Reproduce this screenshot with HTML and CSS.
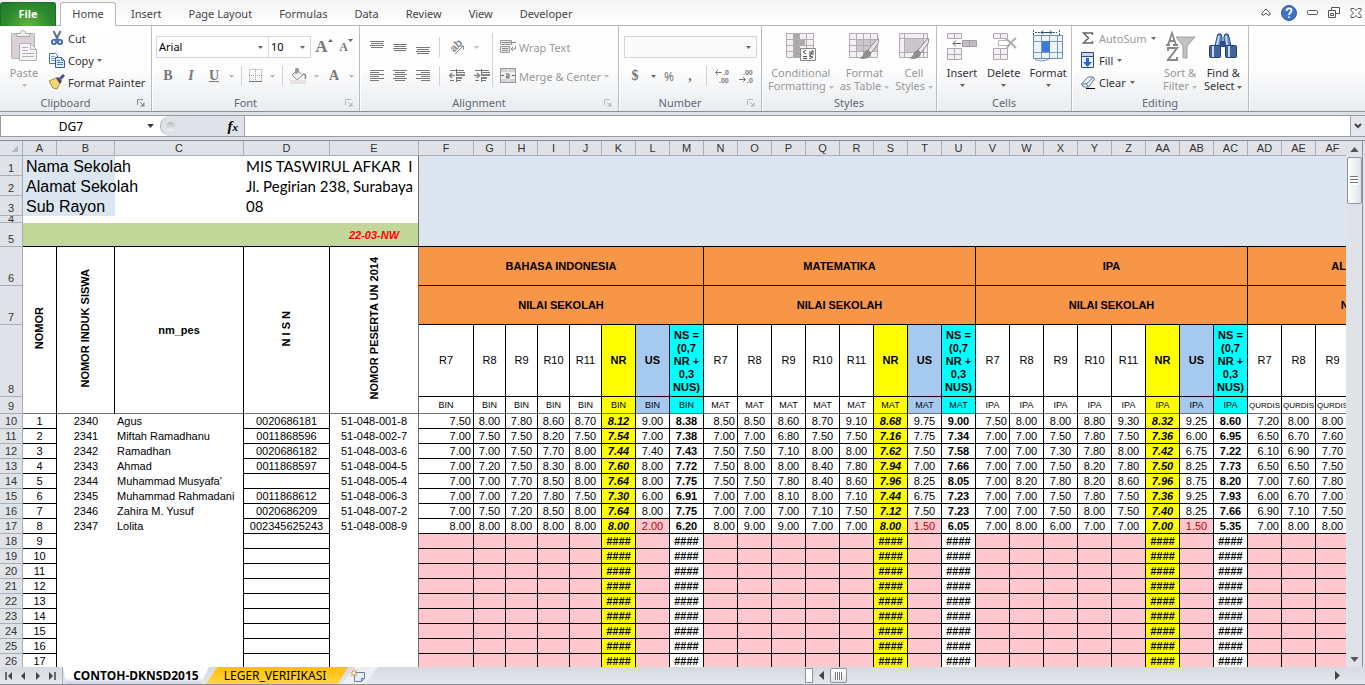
FILE: index.html
```
<!DOCTYPE html>
<html lang="en">

<head>
    <meta charset="UTF-8">
    <meta name="viewport" content="width=device-width, initial-scale=1.0">
    <title>CONTOH-DKNSD2015</title>
    <link rel="stylesheet" href="styles.css">
</head>

<body>

    <!-- shared icon shapes -->
    <svg class="sprite" aria-hidden="true">
        <symbol id="arrow" viewBox="0 0 5 3"><path d="M0 0h5L2.500 3z" fill="currentColor"/></symbol>
        <symbol id="launcher" viewBox="0 0 8 8"><path d="M.5 6V.5H6M3 3l3 3" fill="none" stroke="currentColor"/><path d="M7.500 3v4.500H3z" fill="currentColor"/></symbol>
        <symbol id="brush" viewBox="0 0 20 24"><path d="M19 1L9 13l3 3 8-11z" fill="#e8e6e8" stroke="#888"/><path d="M9 13c-3 0-4 3-5 5-1 2-3 3-4 3 5 2 11 1 12-5z" fill="#8f8f8f"/></symbol>
    </svg>

    <nav class="tabs">
        <button class="tab file">File</button>
        <button class="tab active">Home</button>
        <button class="tab">Insert</button>
        <button class="tab">Page Layout</button>
        <button class="tab">Formulas</button>
        <button class="tab">Data</button>
        <button class="tab">Review</button>
        <button class="tab">View</button>
        <button class="tab">Developer</button>
        <div class="window-buttons">
            <button aria-label="Minimize the Ribbon"><svg width="10" height="9" viewBox="0 0 10 9"><path d="M5 1L1 5v2h2l2-2 2 2h2V5z" fill="#fff" stroke="#555"/></svg></button>
            <button aria-label="Help"><svg width="16" height="16" viewBox="0 0 16 16"><circle cx="8" cy="8" r="7.500" fill="#3f72c8" stroke="#2c5aa8"/><path d="M5.500 6c0-3.500 5-3.500 5-.5C10.500 7.500 8 7.500 8 10M8 11.500v1.500" fill="none" stroke="#fff" stroke-width="1.800"/></svg></button>
            <button aria-label="Minimize window"><svg width="11" height="5" viewBox="0 0 11 5"><rect x=".5" y=".5" width="10" height="4" rx="1" fill="#fff" stroke="#555"/></svg></button>
            <button aria-label="Restore window"><svg width="12" height="11" viewBox="0 0 12 11"><path d="M3.500.5h8v6h-8z" fill="#fff" stroke="#555"/><path d="M.5 3.500h7v7h-7zM2.500 6.500h3v2h-3z" fill="#fff" stroke="#555"/></svg></button>
            <button aria-label="Close window"><svg width="12" height="10" viewBox="0 0 12 10"><path d="M1 .5h3l2 2 2-2h3v2L8.500 5 11 7.500v2H8l-2-2-2 2H1v-2L3.500 5 1 2.500z" fill="#fff" stroke="#555"/></svg></button>
        </div>
    </nav>

    <header class="ribbon">
        <section class="group clipboard">
            <div class="group-body">
                <button class="big paste off">
                    <svg width="28" height="32" viewBox="0 0 28 32"><rect x="1.500" y="3.500" width="23" height="25" rx="1" fill="#d8d2d8" stroke="#b9b3b9"/><path d="M6.500 6.500v-3h4c0-4 5-4 5 0h4v3z" fill="#eee" stroke="#a9a9a9"/><path d="M9.500 13.500h11l6 6v11h-17z" fill="#f6f4f6" stroke="#b5b0b5"/><path d="M20.500 13.500v6h6M12 17.500h6M12 20.500h6M12 23.500h12M12 26.500h12" fill="none" stroke="#b5b0b5"/></svg>
                    <span>Paste</span>
                    <svg class="arrow"><use href="#arrow"/></svg>
                </button>
                <div class="stack">
                    <button class="small">
                        <svg width="16" height="16" viewBox="0 0 16 16"><path d="M4.500 1l4.500 9M11.500 1L7 10" stroke="#5d7089" stroke-width="2"/><circle cx="5" cy="12" r="2.200" fill="#dce8fa" stroke="#2b5cb3" stroke-width="1.600"/><circle cx="11" cy="12" r="2.200" fill="#dce8fa" stroke="#2b5cb3" stroke-width="1.600"/></svg>
                        <span>Cut</span>
                    </button>
                    <button class="small">
                        <svg width="16" height="16" viewBox="0 0 16 16"><path d="M.5 1.500h6l2 2v8h-8z" fill="#fff" stroke="#3e6db5"/><path d="M2 4.500h4M2 6.500h4M2 8.500h4" stroke="#7b9fd6"/><path d="M6.500 5.500h6l3 3v7h-9z" fill="#e9f1fc" stroke="#2f5fa9"/><path d="M12.500 5.500v3h3M8 8.500h3M8 10.500h6M8 12.500h6" fill="none" stroke="#4e80c8"/></svg>
                        <span>Copy</span>
                        <svg class="arrow"><use href="#arrow"/></svg>
                    </button>
                    <button class="small">
                        <svg width="16" height="16" viewBox="0 0 16 16"><path d="M0 7l7-3 4 5-3 6-4-1z" fill="#f0d878" stroke="#a88f38"/><path d="M7 4l2-1 4 4-2 3z" fill="#4b4664"/><path d="M11 5l4-4" stroke="#51489a" stroke-width="3"/></svg>
                        <span>Format Painter</span>
                    </button>
                </div>
            </div>
            <h2>Clipboard</h2>
            <button class="launcher" aria-label="Clipboard options"><svg><use href="#launcher"/></svg></button>
        </section>

        <section class="group font">
            <div class="group-body rows">
                <div class="row">
                    <div class="combo face"><select aria-label="Font"><option>Arial</option></select><svg class="arrow"><use href="#arrow"/></svg></div>
                    <div class="combo size"><select aria-label="Font size"><option>10</option></select><svg class="arrow"><use href="#arrow"/></svg></div>
                    <button class="glyph grow" aria-label="Increase font size">A<svg class="arrow flip"><use href="#arrow"/></svg></button>
                    <button class="glyph shrink" aria-label="Decrease font size">A<svg class="arrow"><use href="#arrow"/></svg></button>
                </div>
                <div class="row styles-row off">
                    <button class="glyph"><b>B</b></button>
                    <button class="glyph"><i>I</i></button>
                    <button class="glyph"><u>U</u></button>
                    <svg class="arrow"><use href="#arrow"/></svg>
                    <span class="sep"></span>
                    <button aria-label="Borders"><svg width="14" height="14" viewBox="0 0 14 14"><path d="M.5.5h12v12H.5zM6.500 0v12M0 6.500h13" fill="none" stroke="#999" stroke-dasharray="1 1"/><path d="M0 12.500h13" stroke="#777"/></svg></button>
                    <svg class="arrow"><use href="#arrow"/></svg>
                    <span class="sep"></span>
                    <button aria-label="Fill color"><svg width="17" height="16" viewBox="0 0 17 16"><path d="M0 12h16v4H0z" fill="#e6e2e4"/><path d="M7 2l6 5-6 5-5-5z" fill="#eee" stroke="#999"/><path d="M6 6V1h2v4M13 6c3 0 3 3 2 5" fill="none" stroke="#888" stroke-width="1.500"/></svg></button>
                    <svg class="arrow"><use href="#arrow"/></svg>
                    <button class="glyph" aria-label="Font color"><b>A</b></button>
                    <svg class="arrow"><use href="#arrow"/></svg>
                </div>
            </div>
            <h2>Font</h2>
            <button class="launcher off" aria-label="Font options"><svg><use href="#launcher"/></svg></button>
        </section>

        <section class="group alignment">
            <div class="group-body off">
                <div class="align-left">
                    <button aria-label="Top align"><svg width="14" height="14" viewBox="0 0 14 14"><path d="M0 1.500h14M1 3.500h12M0 5.500h14M1 7.500h12" stroke="#777"/></svg></button>
                    <button aria-label="Middle align"><svg width="14" height="14" viewBox="0 0 14 14"><path d="M0 4.500h14M1 6.500h12M0 8.500h14M1 10.500h12" stroke="#777"/></svg></button>
                    <button aria-label="Bottom align"><svg width="14" height="14" viewBox="0 0 14 14"><path d="M0 7.500h14M1 9.500h12M0 11.500h14M1 13.500h12" stroke="#777"/></svg></button>
                    <span class="sep"></span>
                    <button aria-label="Orientation"><svg class="orient" width="16" height="16" viewBox="0 0 16 16"><text x="1" y="12" transform="rotate(-45 5 8)" font-family="Liberation Sans" font-size="11" font-weight="bold" fill="#888">ab</text><path d="M6 15l8-8M11 7h3.500v3.500" fill="none" stroke="#888"/></svg></button>
                    <svg class="arrow first"><use href="#arrow"/></svg>
                    <button aria-label="Align left"><svg width="14" height="12" viewBox="0 0 14 12"><path d="M0 .5h14M0 2.500h9M0 4.500h14M0 6.500h9M0 8.500h14M0 10.500h9" stroke="#777"/></svg></button>
                    <button aria-label="Center"><svg width="14" height="12" viewBox="0 0 14 12"><path d="M0 .5h14M2 2.500h10M0 4.500h14M2 6.500h10M0 8.500h14M2 10.500h10" stroke="#777"/></svg></button>
                    <button aria-label="Align right"><svg width="14" height="12" viewBox="0 0 14 12"><path d="M0 .5h14M5 2.500h9M0 4.500h14M5 6.500h9M0 8.500h14M5 10.500h9" stroke="#777"/></svg></button>
                    <span class="sep"></span>
                    <button aria-label="Decrease indent"><svg width="16" height="14" viewBox="0 0 16 14"><path d="M1 1.500h14M7 3.500h9M7 11.500h5M1 11.500h4" stroke="#777"/><path d="M7 5h9v2H7zM7 8h6v2H7z" fill="#888"/><path d="M6 6.500H1M3 4L.5 6.500 3 9" fill="none" stroke="#888" stroke-width="1.500"/><path d="M7.500 0v14" stroke="#777" stroke-dasharray="1 1"/></svg></button>
                    <button aria-label="Increase indent"><svg width="16" height="14" viewBox="0 0 16 14"><path d="M1 1.500h14M7 3.500h9M7 11.500h5M1 11.500h4" stroke="#777"/><path d="M7 5h9v2H7zM7 8h6v2H7z" fill="#888"/><path d="M0 6.500h5M3 4l2.500 2.500L3 9" fill="none" stroke="#888" stroke-width="1.500"/><path d="M7.500 0v14" stroke="#777" stroke-dasharray="1 1"/></svg></button>
                </div>
                <span class="sep tall"></span>
                <div class="align-right">
                    <button class="small">
                        <svg width="16" height="16" viewBox="0 0 16 16"><path d="M.5 1.500h11v4H.5zM.5 7.500h9v6H.5z" fill="#eae6ea" stroke="#999"/><path d="M2 3.500h14M2 9.500h6M2 11.500h6M15.500 7v3H11M13 8l-2 2 2 2" fill="none" stroke="#888"/></svg>
                        <span>Wrap Text</span>
                    </button>
                    <button class="small">
                        <svg width="16" height="16" viewBox="0 0 16 16"><path d="M.5.5h15v14H.5z" fill="#d5d0d5" stroke="#999"/><path d="M1 4.500h14M1 10.500h14M8 1v3M8 11v3" stroke="#f4f2f4"/><path d="M1 5h14v5H1z" fill="#eee"/><path d="M1 7.500h3M12 7.500h3M6 6h3v4H6.500V8H9" fill="none" stroke="#666"/></svg>
                        <span>Merge &amp; Center</span>
                        <svg class="arrow"><use href="#arrow"/></svg>
                    </button>
                </div>
            </div>
            <h2>Alignment</h2>
            <button class="launcher off" aria-label="Alignment options"><svg><use href="#launcher"/></svg></button>
        </section>

        <section class="group number">
            <div class="group-body rows">
                <div class="row">
                    <div class="combo format"><select aria-label="Number format"><option></option></select><svg class="arrow"><use href="#arrow"/></svg></div>
                </div>
                <div class="row number-row">
                    <button class="glyph"><b>$</b></button>
                    <svg class="arrow"><use href="#arrow"/></svg>
                    <button class="percent">%</button>
                    <button class="glyph"><b>,</b></button>
                    <span class="sep"></span>
                    <button aria-label="Increase decimal"><svg width="16" height="18" viewBox="0 0 16 18"><path d="M6.500 5.500H1M3 3L.5 5.500 3 8" fill="none" stroke="#777"/><text x="8" y="8" class="tiny">.0</text><text x="4" y="16" class="tiny">.00</text></svg></button>
                    <button aria-label="Decrease decimal"><svg width="16" height="18" viewBox="0 0 16 18"><path d="M0 12.500h6M4 10l2.500 2.500L4 15" fill="none" stroke="#777"/><text x="4" y="8" class="tiny">.00</text><text x="8" y="16" class="tiny">.0</text></svg></button>
                </div>
            </div>
            <h2>Number</h2>
            <button class="launcher off" aria-label="Number options"><svg><use href="#launcher"/></svg></button>
        </section>

        <section class="group styles">
            <div class="group-body off">
                <button class="big">
                    <svg width="32" height="32" viewBox="0 0 32 32"><path d="M1.500 3.500h27v24h-27z" fill="#f3eff3" stroke="#b3adb3"/><path d="M8 4h6v23H8zM14 10h6v6h-6z" fill="#aaa"/><path d="M1 9.500h27M1 15.500h27M1 21.500h27M8.500 4v23M14.500 4v23M21.500 4v23" stroke="#b3adb3"/><path d="M15.500 18.500h15v12h-15z" fill="#f8f8f8" stroke="#888"/><path d="M21 20l-3 2 3 2M18 26.500h4M18 28.500h4M24 22h5M24 24h5M28 20l-3 6M24 26l4 1-4 2" fill="none" stroke="#555"/></svg>
                    <span>Conditional<br>Formatting <svg class="arrow"><use href="#arrow"/></svg></span>
                </button>
                <button class="big">
                    <svg width="32" height="32" viewBox="0 0 32 32"><path d="M1.500 3.500h28v24h-28z" fill="#f3eff3" stroke="#b3adb3"/><path d="M8 10h21v11H8z" fill="#ccc6cc"/><path d="M1 9.500h28M1 15.500h28M1 21.500h28M8.500 4v23M15.500 4v23M22.500 4v23" stroke="#b3adb3"/><use href="#brush" x="11" y="7" width="20" height="24"/></svg>
                    <span>Format<br>as Table <svg class="arrow"><use href="#arrow"/></svg></span>
                </button>
                <button class="big">
                    <svg width="32" height="32" viewBox="0 0 32 32"><path d="M1.500 3.500h28v24h-28z" fill="#f3eff3" stroke="#b3adb3"/><path d="M6 9h19v13H6z" fill="#ccc6cc"/><path d="M1 8.500h28M1 22.500h28M6.500 4v23M25.500 4v23" stroke="#b3adb3"/><use href="#brush" x="11" y="7" width="20" height="24"/></svg>
                    <span>Cell<br>Styles <svg class="arrow"><use href="#arrow"/></svg></span>
                </button>
            </div>
            <h2>Styles</h2>
        </section>

        <section class="group cells">
            <div class="group-body">
                <button class="big">
                    <svg width="32" height="32" viewBox="0 0 32 32"><path d="M1.500 3.500h14v5h-14zM8.500 3.500v5M1.500 18.500h14v11h-14zM8.500 18.500v11M1.500 24.500h14" fill="#f3eff3" stroke="#b0a8b0"/><path d="M16.500 10.500h14v6h-14zM23.500 10.500v6" fill="#c4bec4" stroke="#a39ca3"/><path d="M15 13.500H7M10 10.500l-3 3 3 3" fill="none" stroke="#666"/></svg>
                    <span>Insert</span>
                    <svg class="arrow"><use href="#arrow"/></svg>
                </button>
                <button class="big">
                    <svg width="32" height="32" viewBox="0 0 32 32"><path d="M5.500 3.500h14v5h-14zM12.500 3.500v5M5.500 18.500h14v11h-14zM12.500 18.500v11M5.500 24.500h14" fill="#f3eff3" stroke="#b0a8b0"/><path d="M10.500 10.500h11v5h-11z" fill="none" stroke="#777" stroke-dasharray="1 1"/><path d="M18 9c3 2 7 6 10 9M28 8c-4 3-7 6-9 10" fill="none" stroke="#aaa" stroke-width="2"/></svg>
                    <span>Delete</span>
                    <svg class="arrow"><use href="#arrow"/></svg>
                </button>
                <button class="big">
                    <svg width="32" height="32" viewBox="0 0 32 32"><path d="M1.500 0v5M27.500 0v5M3 2.500h22" stroke="#3a5178" stroke-dasharray="2 1"/><path d="M9 2.500h10M11 .5l-2 2 2 2M18 .5l2 2-2 2" fill="none" stroke="#26456f"/><path d="M1.500 5.500h29v23h-29z" fill="#eef4fc" stroke="#6d8db9"/><path d="M1 11.500h29M1 22.500h29M9.500 6v22M17.500 6v22M25.500 6v22" stroke="#7b9ac4"/><path d="M10 11h8v11h-8z" fill="#3f79dd"/><path d="M3 29c4 3 10 2 14 0" fill="none" stroke="#6d8db9"/></svg>
                    <span>Format</span>
                    <svg class="arrow"><use href="#arrow"/></svg>
                </button>
            </div>
            <h2>Cells</h2>
        </section>

        <section class="group editing">
            <div class="group-body">
                <div class="stack">
                    <button class="small autosum">
                        <svg width="14" height="14" viewBox="0 0 14 14"><path d="M11.500 4V2h-9l5 5-5 5h9v-2" fill="none" stroke="#666" stroke-width="1.500"/></svg>
                        <span>AutoSum</span>
                        <svg class="arrow"><use href="#arrow"/></svg>
                    </button>
                    <button class="small">
                        <svg width="14" height="16" viewBox="0 0 14 16"><path d="M.5.5h12v15H.5z" fill="#e8f0fb" stroke="#2f4f82"/><path d="M1 1h11v3H1z" fill="#c4d6ef"/><path d="M1 4.500h11" stroke="#2f4f82"/><path d="M5 6h3v4h3l-4.500 5L2 10h3z" fill="#2b66cf"/></svg>
                        <span>Fill</span>
                        <svg class="arrow"><use href="#arrow"/></svg>
                    </button>
                    <button class="small">
                        <svg width="14" height="14" viewBox="0 0 14 14"><path d="M7 2h5l1.500 2-6 8h-5L.5 9z" fill="#eef3fa" stroke="#56759e"/><path d="M.5 9h5l7-7M5.500 9l2 3" fill="none" stroke="#56759e"/><path d="M5 13.500h9" stroke="#000"/></svg>
                        <span>Clear</span>
                        <svg class="arrow"><use href="#arrow"/></svg>
                    </button>
                </div>
                <button class="big off">
                    <svg width="32" height="32" viewBox="0 0 32 32"><path d="M12 7h19l-8 9v12h-4V16z" fill="#c4c1c4" stroke="#a3a0a3"/><path d="M2 15h4M9 15h5M4 15L8 3l4 12M5.500 11h5" fill="none" stroke="#888" stroke-width="1.800"/><path d="M4 21v-3h9L4 30h9v-3" fill="none" stroke="#888" stroke-width="2"/></svg>
                    <span>Sort &amp;<br>Filter <svg class="arrow"><use href="#arrow"/></svg></span>
                </button>
                <button class="big">
                    <svg width="32" height="32" viewBox="0 0 32 32"><path d="M8 16l2-9 1-3h3l1 3v9zM17 16V7l1-3h3l1 3 2 9z" fill="#5f88c8" stroke="#2a4a7c"/><path d="M13 11h6v6h-6z" fill="#2b4d85"/><rect x="2.500" y="15.500" width="11" height="12" rx="1" fill="#41649e" stroke="#233f6d"/><rect x="18.500" y="15.500" width="11" height="12" rx="1" fill="#41649e" stroke="#233f6d"/><path d="M6 16v11M22 16v11M12 6l-2 9M19 6l1 9" stroke="#c3d8f5" stroke-width="2"/></svg>
                    <span>Find &amp;<br>Select <svg class="arrow"><use href="#arrow"/></svg></span>
                </button>
            </div>
            <h2>Editing</h2>
        </section>
    </header>

    <div class="formula-bar">
        <div class="name-box">
            <input type="text" value="DG7" aria-label="Name box">
            <svg class="arrow"><use href="#arrow"/></svg>
        </div>
        <div class="fx"><span class="dot"></span><button aria-label="Insert function"><i>f<sub>x</sub></i></button></div>
        <input class="formula" type="text" aria-label="Formula">
        <button class="expand" aria-label="Expand formula bar"><svg width="8" height="6" viewBox="0 0 8 6"><path d="M1 1l3 3 3-3" fill="none" stroke="#444" stroke-width="2"/></svg></button>
    </div>

    <main class="sheet">
        <div class="grid">
            <table>
                <colgroup>
                    <col class="w-head"><col class="w-a"><col class="w-b"><col class="w-c"><col class="w-d"><col class="w-e">
                    <col class="w-f"><col class="w-g" span="4"><col class="w-k" span="22"><col class="w-rest">
                </colgroup>
                <thead>
                    <tr id="letters"></tr>
                </thead>
                <tbody id="cells">
                    <tr class="h20">
                        <th scope="row">1</th>
                        <td class="blue big-text">Nama Sekolah</td><td class="blue"></td><td></td>
                        <td class="school">MIS TASWIRUL AFKAR&nbsp; I</td><td class="freeze"></td>
                        <td class="blue" colspan="28"></td>
                    </tr>
                    <tr class="h20">
                        <th scope="row">2</th>
                        <td class="blue big-text">Alamat Sekolah</td><td class="blue"></td><td></td>
                        <td class="school">Jl. Pegirian 238, Surabaya</td><td class="freeze"></td>
                        <td class="blue" colspan="28"></td>
                    </tr>
                    <tr class="h20">
                        <th scope="row">3</th>
                        <td class="blue big-text">Sub Rayon</td><td class="blue"></td><td></td>
                        <td class="school">08</td><td class="freeze"></td>
                        <td class="blue" colspan="28"></td>
                    </tr>
                    <tr class="h7">
                        <th scope="row"><div>4</div></th>
                        <td colspan="4"></td><td class="freeze"></td>
                        <td class="blue" colspan="28"></td>
                    </tr>
                    <tr class="h24">
                        <th scope="row">5</th>
                        <td class="green line" colspan="4"></td><td class="green line freeze code">22-03-NW</td>
                        <td class="blue line" colspan="28"></td>
                    </tr>
                    <tr class="h39">
                        <th scope="row">6</th>
                        <td class="box title last" rowspan="4"><span class="turned">NOMOR</span></td>
                        <td class="box title last" rowspan="4"><span class="turned">NOMOR INDUK SISWA</span></td>
                        <td class="box title last" rowspan="4">nm_pes</td>
                        <td class="box title last" rowspan="4"><span class="turned">N I S N</span></td>
                        <td class="box title last freeze" rowspan="4"><span class="turned">NOMOR PESERTA UN 2014</span></td>
                        <td class="box title orange" colspan="8">BAHASA INDONESIA</td>
                        <td class="box title orange" colspan="8">MATEMATIKA</td>
                        <td class="box title orange" colspan="8">IPA</td>
                        <td class="box title orange" colspan="4">AL QUR'AN HADITS</td>
                    </tr>
                    <tr class="h39">
                        <th scope="row">7</th>
                        <td class="box title orange" colspan="8">NILAI SEKOLAH</td>
                        <td class="box title orange" colspan="8">NILAI SEKOLAH</td>
                        <td class="box title orange" colspan="8">NILAI SEKOLAH</td>
                        <td class="box title orange" colspan="4">NILAI SEKOLAH</td>
                    </tr>
                    <tr class="h72" id="parts"><th scope="row">8</th></tr>
                    <tr class="h17" id="subjects"><th scope="row">9</th></tr>
                </tbody>
            </table>
        </div>
        <div class="vscroll">
            <button aria-label="Scroll up"><svg class="tri flip"><use href="#arrow"/></svg></button>
            <span class="thumb"></span>
            <button class="down" aria-label="Scroll down"><svg class="tri"><use href="#arrow"/></svg></button>
        </div>
    </main>

    <footer class="bottom">
        <div class="sheet-nav">
            <button aria-label="First sheet"><svg width="8" height="8" viewBox="0 0 8 8"><path d="M1 0v8" stroke="#444" stroke-width="1.500"/><path d="M7 0v8L3 4z" fill="#444"/></svg></button>
            <button aria-label="Previous sheet"><svg width="8" height="8" viewBox="0 0 8 8"><path d="M6 0v8L2 4z" fill="#444"/></svg></button>
            <button aria-label="Next sheet"><svg width="8" height="8" viewBox="0 0 8 8"><path d="M2 0v8l4-4z" fill="#444"/></svg></button>
            <button aria-label="Last sheet"><svg width="8" height="8" viewBox="0 0 8 8"><path d="M1 0v8l4-4z" fill="#444"/><path d="M7 0v8" stroke="#444" stroke-width="1.500"/></svg></button>
        </div>
        <button class="sheet-tab current">CONTOH-DKNSD2015</button>
        <button class="sheet-tab gold">LEGER_VERIFIKASI</button>
        <button class="sheet-tab new" aria-label="Insert worksheet"><svg width="16" height="14" viewBox="0 0 16 14"><path d="M4.500 3.500h10v6l-3 3h-7z" fill="#e6eefb" stroke="#5f7fae"/><path d="M11.500 12.500v-3h3" fill="#9fb9de" stroke="#5f7fae"/><path d="M4 0v8M0 4h8M1 1l6 6M7 1L1 7" stroke="#e08a1e"/><circle cx="4" cy="4" r="1.500" fill="#fff"/></svg></button>
        <div class="hscroll">
            <span class="splitter"></span>
            <button aria-label="Scroll left"><svg width="5" height="9" viewBox="0 0 5 9"><path d="M5 0v9L0 4.500z" fill="#444"/></svg></button>
            <span class="thumb"></span>
            <button class="right" aria-label="Scroll right"><svg width="5" height="9" viewBox="0 0 5 9"><path d="M0 0v9l5-4.500z" fill="#444"/></svg></button>
        </div>
    </footer>

    <script src="sheet.js"></script>
</body>

</html>
```
FILE: styles.css
```
* {
    box-sizing: border-box;
}

body {
    display: flex;
    flex-direction: column;
    height: 100vh;
    margin: 0;
    overflow: hidden;
    font-family: "Noto Sans", "Open Sans", sans-serif;
    font-size: 11px;
    color: #333;
    background-color: #dfe3e8;
}

button,
input,
select {
    font: inherit;
    color: inherit;
    margin: 0;
    padding: 0;
    border: none;
    background: none;
}

svg {
    display: block;
    flex: none;
}

.sprite {
    position: absolute;
    width: 0;
    height: 0;
}

.arrow {
    width: 5px;
    height: 3px;
    color: #666;
}

.flip {
    transform: rotate(180deg);
}

/* tabs */

.tabs {
    display: flex;
    flex: none;
    height: 26px;
    padding-top: 2px;
    background: linear-gradient(#f4f4f4, #fff);
    border-bottom: 1px solid #b4b8bd;
}

.tab {
    height: 24px;
    padding: 0 13px 2px;
    margin-right: 1px;
    color: #444;
}

.tab.file {
    width: 56px;
    margin-right: 4px;
    color: #fff;
    font-weight: bold;
    border: 1px solid #1d6b27;
    border-bottom: none;
    border-radius: 3px 3px 0 0;
    background: radial-gradient(ellipse at bottom, #62b83c, #2c8a2e 60%, #23792a);
}

.tab.active {
    width: 56px;
    margin-right: 2px;
    padding: 0 0 2px;
    border: 1px solid #b4b8bd;
    border-bottom: none;
    border-radius: 3px 3px 0 0;
    background-color: #fff;
}

.window-buttons {
    display: flex;
    align-items: center;
    gap: 10px;
    margin-left: auto;
    padding: 0 3px 2px 0;
}

/* ribbon */

.ribbon {
    display: flex;
    flex: none;
    height: 86px;
    background: linear-gradient(#fff, #fdfdfe 50%, #e9ecef);
    border-bottom: 1px solid #8b9097;
}

.group {
    position: relative;
    display: flex;
    flex-direction: column;
    border-right: 1px solid #b8bdc3;
    box-shadow: 1px 0 #fff;
}

.group h2 {
    margin: 0;
    font-size: 11px;
    line-height: 16px;
    font-weight: normal;
    text-align: center;
    color: #5f6774;
}

.clipboard { width: 152px; }
.clipboard h2 { padding-right: 20px; }
.font { width: 208px; }
.font h2 { padding-right: 20px; }
.alignment { width: 259px; }
.alignment h2 { padding-right: 20px; }
.number { width: 143px; }
.number h2 { padding-right: 20px; }
.styles { width: 175px; }
.cells { width: 135px; }
.editing { width: 177px; }

.group-body {
    display: flex;
    height: 69px;
    padding-top: 1px;
}

.off {
    color: #999;
}

.off .arrow {
    color: #bbb;
}

.launcher {
    position: absolute;
    right: 6px;
    bottom: 4px;
    color: #888;
}

.launcher.off {
    color: #bbb;
}

.launcher svg {
    width: 8px;
    height: 8px;
}

.big {
    display: flex;
    flex-direction: column;
    align-items: center;
    flex: none;
    line-height: 13px;
    padding-top: 3px;
}

.big > span {
    padding-top: 4px;
    white-space: nowrap;
}

.big > .arrow {
    margin-top: 5px;
}

.big span .arrow {
    display: inline-block;
    vertical-align: middle;
}

.paste {
    width: 48px;
}

.stack {
    display: flex;
    flex-direction: column;
}

.small {
    display: flex;
    align-items: center;
    gap: 4px;
    height: 22px;
    white-space: nowrap;
}

.sep {
    width: 1px;
    height: 20px;
    background-color: #d0d3d7;
}

.rows {
    flex-direction: column;
    gap: 7px;
    padding: 10px 4px 0;
}

.row {
    display: flex;
    align-items: center;
    height: 22px;
}

.combo {
    display: flex;
    align-items: center;
    height: 22px;
    padding: 0 5px 0 2px;
    border: 1px solid #d3d7dc;
    background-color: #fff;
    color: #000;
}

.combo select {
    appearance: none;
    flex: 1;
    min-width: 0;
    padding-bottom: 2px;
}

.face { width: 113px; }

.size {
    width: 43px;
    margin-left: -1px;
}

.format {
    width: 134px;
    margin-left: 1px;
    background-color: #fafafa;
}

.glyph {
    display: flex;
    justify-content: center;
    width: 16px;
    font-family: "Liberation Serif", serif;
    font-size: 14px;
    line-height: 20px;
    color: #777;
}

.glyph i,
.glyph u {
    font-weight: bold;
}

.grow {
    margin-left: 5px;
    font-size: 17px;
    font-weight: bold;
}

.shrink {
    margin-left: 6px;
    font-size: 12px;
    font-weight: bold;
}

.grow .arrow,
.shrink .arrow {
    margin-top: 2px;
}

.styles-row {
    gap: 7px;
    padding-left: 4px;
}

.number-row {
    gap: 8px;
    padding-left: 4px;
}

.percent {
    font-size: 12px;
    color: #777;
}

.tiny {
    font-family: "Liberation Sans", sans-serif;
    font-size: 7px;
    font-weight: bold;
    fill: #777;
}

.align-left {
    display: grid;
    grid-template-columns: repeat(3, 14px) 1px 16px 16px;
    grid-auto-rows: 22px;
    column-gap: 9px;
    row-gap: 7px;
    align-items: center;
    justify-items: center;
    padding: 9px 0 0 10px;
}

.arrow.first {
    justify-self: start;
}

.orient {
    overflow: visible;
}

.sep.tall {
    height: 54px;
    margin: 6px 0 0 2px;
}

.align-right {
    display: flex;
    flex-direction: column;
    gap: 7px;
    padding: 9px 0 0 7px;
}

.align-right .small {
    gap: 3px;
}

.clipboard .stack {
    padding-left: 1px;
}

.clipboard .small {
    gap: 3px;
}

.styles .group-body {
    justify-content: space-around;
    padding-left: 3px;
}

.cells .group-body {
    gap: 9px;
    padding-left: 9px;
}

.editing .group-body {
    gap: 7px;
    padding-left: 9px;
}

.editing .stack {
    width: 75px;
}

.autosum span {
    color: #999;
}

/* formula bar */

.formula-bar {
    display: flex;
    flex: none;
    height: 22px;
    margin: 3px 0;
    border: 1px solid #969ba3;
    border-right: none;
    background-color: #fff;
    font-size: 12px;
    color: #000;
}

.name-box {
    display: flex;
    align-items: center;
    width: 159px;
    padding-right: 6px;
}

.name-box input {
    flex: 1;
    min-width: 0;
    padding-right: 6px;
    text-align: center;
}

.name-box .arrow {
    width: 7px;
    height: 4px;
    color: #333;
}

.fx {
    display: flex;
    align-items: center;
    justify-content: space-between;
    width: 85px;
    padding: 0 6px 0 5px;
    border: 1px solid #a4a9b0;
    border-width: 0 1px;
    border-radius: 10px 0 0 10px;
    background-color: #dfe3e8;
}

.fx .dot {
    width: 9px;
    height: 9px;
    border-radius: 50%;
    background: linear-gradient(#b5bac0, #f5f6f8);
}

.fx button {
    font-family: "Liberation Serif", serif;
    font-size: 15px;
    font-weight: bold;
    line-height: 18px;
}

.fx sub {
    font-size: 11px;
    line-height: 0;
    vertical-align: baseline;
}

.formula {
    flex: 1;
}

.expand {
    display: flex;
    align-items: center;
    justify-content: center;
    width: 15px;
    border-left: 1px solid #a4a9b0;
    background-color: #e4e7eb;
}

/* worksheet */

.sheet {
    display: flex;
    flex: 1;
    min-height: 0;
    border-top: 1px solid #868a90;
}

.grid {
    flex: 1;
    min-width: 0;
    overflow: hidden;
    background-color: #fff;
}

table {
    width: 0;
    table-layout: fixed;
    border-spacing: 0;
    font-family: "Liberation Sans", Arial, sans-serif;
    font-size: 11px;
    line-height: 13px;
    color: #000;
}

.w-head { width: 23px; }
.w-a { width: 34px; }
.w-b { width: 58px; }
.w-c { width: 129px; }
.w-d { width: 86px; }
.w-e { width: 89px; }
.w-f { width: 55px; }
.w-g { width: 32px; }
.w-k { width: 34px; }
.w-rest { width: 170px; }

th,
td {
    padding: 0;
    white-space: nowrap;
    text-align: center;
}

th {
    font-weight: normal;
    color: #333;
    background-color: #dfe3e8;
    border-right: 1px solid #a9aeb5;
    border-bottom: 1px solid #a9aeb5;
}

tbody th {
    vertical-align: bottom;
}

thead th {
    height: 15px;
}

.corner {
    background: linear-gradient(135deg, transparent 50%, #b4b9c0 50%) 11px 4px / 7px 7px no-repeat #dfe3e8;
}

.h20 { height: 20px; }
.h7 { height: 7px; }
.h24 { height: 24px; }
.h39 { height: 39px; }
.h72 { height: 72px; }
.h17 { height: 17px; }
.h15 { height: 15px; }

.h7 div {
    height: 6px;
    line-height: 6px;
    overflow: hidden;
}

.blue {
    background-color: #dce6f1;
}

.green {
    background-color: #c4d79b;
}

.big-text {
    padding-left: 3px;
    font-size: 16px;
    line-height: 18px;
    text-align: left;
    vertical-align: bottom;
}

.school {
    padding-left: 2px;
    font-family: Lato, sans-serif;
    font-size: 15px;
    line-height: 18px;
    text-align: left;
}

.code {
    padding-top: 2px;
    font-weight: bold;
    font-style: italic;
    color: #f00;
}

.line,
.box {
    border-bottom: 1px solid #000;
}

.box,
.side {
    border-right: 1px solid #000;
}

.freeze {
    border-right: 1px solid #6f6f6f;
}

.last {
    border-bottom-color: #6f6f6f;
}

.title,
.strong {
    font-weight: bold;
}

.turned {
    display: inline-block;
    writing-mode: vertical-rl;
    transform: rotate(180deg);
}

.orange {
    background-color: #f79646;
}

.nr {
    background-color: #ff0;
}

.us {
    background-color: #a6c9ef;
}

.ns {
    background-color: #0ff;
}

.formula-label {
    padding-top: 2px;
    white-space: normal;
}

.subject {
    font-size: 9px;
    line-height: 11px;
}

.subject.long {
    font-size: 8px;
}

.left {
    padding-left: 2px;
    text-align: left;
}

.right-text {
    padding-right: 2px;
    text-align: right;
}

.score-nr {
    font-weight: bold;
    font-style: italic;
    background-color: #ff0;
}

.pink {
    background-color: #ffc7ce;
    color: #c00010;
}

/* scroll bars */

.vscroll {
    display: flex;
    flex-direction: column;
    align-items: center;
    width: 17px;
    margin-right: 2px;
    border-right: 1px solid #8b9097;
    background-color: #dfe3e8;
}

.vscroll button {
    padding: 6px 0 5px;
}

.tri {
    width: 9px;
    height: 5px;
    color: #555;
}

.vscroll .thumb {
    display: block;
    width: 15px;
    height: 47px;
    border: 1px solid #8f959d;
    border-radius: 2px;
    background: repeating-linear-gradient(#777 0 1px, #fff 1px 3px) center / 8px 9px no-repeat, linear-gradient(90deg, #fff, #dfe3e8);
}

.vscroll .down {
    margin-top: auto;
}

.bottom {
    display: flex;
    flex: none;
    height: 18px;
    border-bottom: 1px solid #8b9097;
    background: linear-gradient(#d6dae0, #e4e7eb);
    color: #000;
}

.sheet-nav {
    display: flex;
    align-items: center;
    justify-content: space-between;
    width: 63px;
    padding: 0 6px 0 5px;
    border-right: 1px solid #a9aeb5;
}

.sheet-tab {
    font-size: 12px;
    line-height: 16px;
}

.current {
    width: 146px;
    font-weight: bold;
    background: linear-gradient(#fff 60%, #c6d0e2);
    clip-path: polygon(0 0, 100% 0, 94% 100%, 2% 100%);
}

.gold {
    width: 142px;
    margin-left: -3px;
    padding-right: 4px;
    background: linear-gradient(#ffc000, #ffd24a);
    clip-path: polygon(8% 0, 100% 0, 93% 100%, 0 100%);
}

.new {
    display: flex;
    align-items: center;
    justify-content: center;
    width: 36px;
    margin-left: -6px;
    padding-right: 4px;
    background-color: #eceff3;
    clip-path: polygon(35% 0, 100% 0, 65% 100%, 0 100%);
}

.hscroll {
    display: flex;
    align-items: center;
    width: 41%;
    margin-left: auto;
    padding-right: 19px;
}

.splitter {
    width: 8px;
    height: 15px;
    margin-right: 6px;
    border: 1px solid #8f959d;
    background-color: #fff;
}

.hscroll .thumb {
    width: 17px;
    height: 15px;
    margin-left: 6px;
    border: 1px solid #8f959d;
    border-radius: 2px;
    background: repeating-linear-gradient(90deg, #777 0 1px, #fff 1px 2px) center / 7px 8px no-repeat, linear-gradient(#fff, #dfe3e8);
}

.hscroll .right {
    margin-left: auto;
    padding-right: 6px;
}
```
FILE: sheet.js
```
var letters = 'A B C D E F G H I J K L M N O P Q R S T U V W X Y Z AA AB AC AD AE AF'.split(' ');
var parts = ['R7', 'R8', 'R9', 'R10', 'R11', 'NR', 'US', 'NS = (0,7 NR + 0,3 NUS)'];
var subjects = ['BIN', 'MAT', 'IPA', 'QURDIS'];
var scoreCount = 27;

var students = [
    ['2340', 'Agus', '0020686181', '51-048-001-8', '7.50 8.00 7.80 8.60 8.70 8.12 9.00 8.38 8.50 8.50 8.60 8.70 9.10 8.68 9.75 9.00 7.50 8.00 8.00 8.80 9.30 8.32 9.25 8.60 7.20 8.00 8.00'],
    ['2341', 'Miftah Ramadhanu', '0011868596', '51-048-002-7', '7.00 7.50 7.50 8.20 7.50 7.54 7.00 7.38 7.00 7.00 6.80 7.50 7.50 7.16 7.75 7.34 7.00 7.00 7.50 7.80 7.50 7.36 6.00 6.95 6.50 6.70 7.60'],
    ['2342', 'Ramadhan', '0020686182', '51-048-003-6', '7.00 7.00 7.50 7.70 8.00 7.44 7.40 7.43 7.50 7.50 7.10 8.00 8.00 7.62 7.50 7.58 7.00 7.00 7.30 7.80 8.00 7.42 6.75 7.22 6.10 6.90 7.70'],
    ['2343', 'Ahmad', '0011868597', '51-048-004-5', '7.00 7.20 7.50 8.30 8.00 7.60 8.00 7.72 7.50 8.00 8.00 8.40 7.80 7.94 7.00 7.66 7.00 7.00 7.50 8.20 7.80 7.50 8.25 7.73 6.50 6.50 7.50'],
    ['2344', "Muhammad Musyafa'", '', '51-048-005-4', '7.00 7.00 7.70 8.50 8.00 7.64 8.00 7.75 7.50 7.50 7.80 8.40 8.60 7.96 8.25 8.05 7.00 8.20 7.80 8.20 8.60 7.96 8.75 8.20 7.00 7.60 7.80'],
    ['2345', 'Muhammad Rahmadani', '0011868612', '51-048-006-3', '7.00 7.00 7.20 7.80 7.50 7.30 6.00 6.91 7.00 7.00 8.10 8.00 7.10 7.44 6.75 7.23 7.00 7.00 7.50 7.80 7.50 7.36 9.25 7.93 6.00 6.70 7.00'],
    ['2346', 'Zahira M. Yusuf', '0020686209', '51-048-007-2', '7.00 7.50 7.20 8.50 8.00 7.64 8.00 7.75 7.00 7.00 7.00 7.10 7.50 7.12 7.50 7.23 7.00 7.00 7.50 8.00 7.50 7.40 8.25 7.66 6.90 7.10 7.50'],
    ['2347', 'Lolita', '002345625243', '51-048-008-9', '8.00 8.00 8.00 8.00 8.00 8.00 2.00 6.20 8.00 9.00 9.00 7.00 7.00 8.00 1.50 6.05 7.00 8.00 6.00 7.00 7.00 7.00 1.50 5.35 7.00 8.00 8.00']
];

function add(row, tag, text, className) {
    var cell = document.createElement(tag);
    cell.textContent = text;
    if (className) cell.className = className;
    row.appendChild(cell);
    return cell;
}

// column letters
var head = document.getElementById('letters');
add(head, 'th', '', 'corner');
letters.forEach(function (letter) {
    add(head, 'th', letter).scope = 'col';
});
add(head, 'th', '');

// rows 8 and 9
var fills = ['', '', '', '', '', ' nr strong', ' us strong', ' ns strong formula-label'];
var partRow = document.getElementById('parts');
var subjectRow = document.getElementById('subjects');
for (var i = 0; i < scoreCount; i++) {
    var fill = fills[i % 8];
    var subject = subjects[Math.floor(i / 8)];
    add(partRow, 'td', parts[i % 8], 'box' + fill);
    add(subjectRow, 'td', subject, 'box last subject' + fill.split(' strong')[0] + (subject.length > 3 ? ' long' : ''));
}

// students, then the rows that are still empty
var body = document.getElementById('cells');
for (var n = 1; n <= 17; n++) {
    var student = students[n - 1] || ['', '', '', '', ''];
    var scores = student[4].split(' ');
    var row = document.createElement('tr');
    row.className = 'h15';
    add(row, 'th', n + 9).scope = 'row';
    add(row, 'td', n, 'box');
    add(row, 'td', student[0]);
    add(row, 'td', student[1], 'left side');
    add(row, 'td', student[2], 'box');
    add(row, 'td', student[3], 'freeze');
    for (var c = 0; c < scoreCount; c++) {
        var part = c % 8;
        var score = scores[c] || '';
        var name = 'box';
        if (part === 5) name += ' score-nr';
        else if (part === 7) name += ' strong';
        else if (!score || parseFloat(score) < 3) name += ' pink';
        if (part === 0) name += ' right-text';
        if (!score && (part === 5 || part === 7)) score = '####';
        add(row, 'td', score, name);
    }
    body.appendChild(row);
}
```
